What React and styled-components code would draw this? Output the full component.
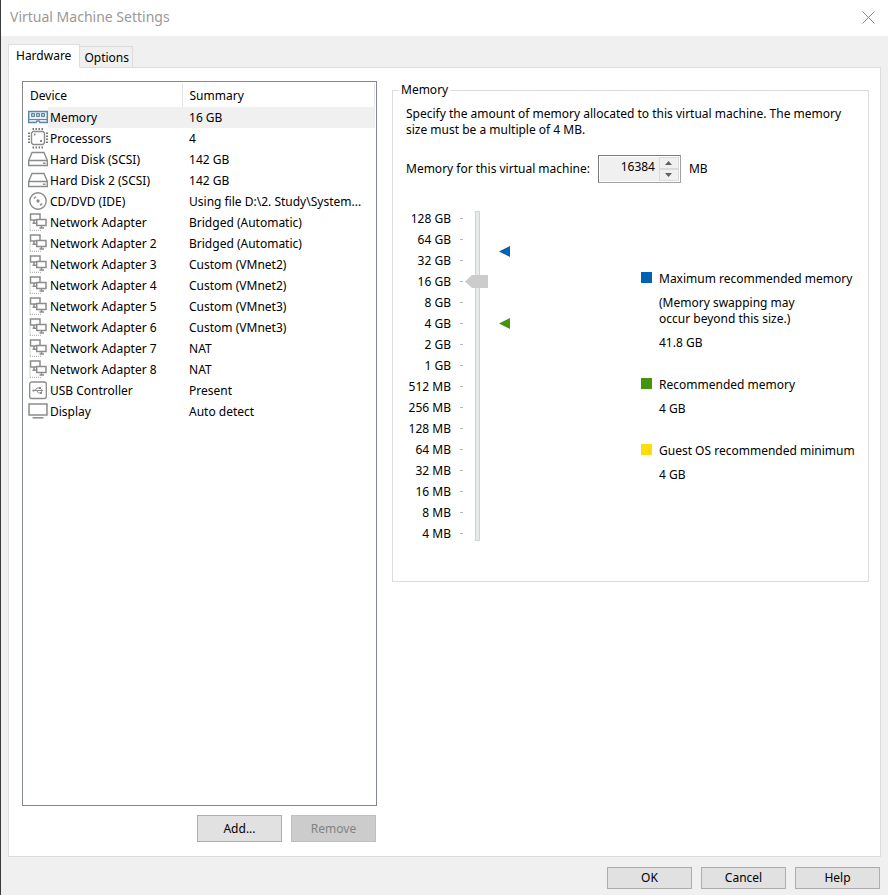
import React, { useState } from 'react'
import styled, { createGlobalStyle } from 'styled-components';

const GlobalStyle = createGlobalStyle`
* {
box-sizing: border-box;
}
body {
margin: 0;
background: #f0f0f0;
color: #000;
font: 12px/16px 'Noto Sans', Tahoma, sans-serif;
}
button, input {
font: inherit;
color: inherit;
}
`;

const Window = styled('div')`
min-height: 100vh;
display: flex;
flex-direction: column;
border-left: 1px solid #3a3a3a;
`;

const TitleBar = styled('header')`
display: flex;
align-items: center;
justify-content: space-between;
height: 36px;
padding: 0 13px 2px 9px;
background: #fff;
`;

const Title = styled('h1')`
margin: 0;
font: 400 14px/20px 'Noto Sans', 'Segoe UI', sans-serif;
color: #999;
`;

const CloseButton = styled('button')`
display: flex;
padding: 0;
border: 0;
background: none;
color: #8a8a8a;
`;

const Tabs = styled('div')`
display: flex;
align-items: flex-end;
height: 32px;
padding-left: 7px;
margin-bottom: -1px;
z-index: 1;
`;

const Tab = styled('button')`
height: ${({ $active }) => $active ? '24px' : '22px'};
padding: ${({ $active }) => $active ? '0 8px 1px 7px' : '1px 3px 0 4px'};
border: 1px solid #dcdcdc;
border-left-width: ${({ $active }) => $active ? '1px' : '0'};
border-bottom-color: ${({ $active }) => $active ? '#fff' : '#dcdcdc'};
background: ${({ $active }) => $active ? '#fff' : '#f0f0f0'};
`;

const Panel = styled('main')`
flex: 1;
display: flex;
gap: 15px;
margin: 0 7px;
padding: 13px 11px 14px 13px;
border: 1px solid #dcdcdc;
background: #fff;
`;

const DeviceColumn = styled('section')`
flex: 0 1 355px;
display: flex;
flex-direction: column;
`;

const DeviceList = styled('div')`
flex: 1;
padding: 1px 1px 0 0;
border: 1px solid #828790;
`;

const DeviceTable = styled('table')`
width: 100%;
table-layout: fixed;
border-collapse: collapse;
`;

const HeadCell = styled('th')`
height: 24px;
padding: 2px 0 0 7px;
border-right: 1px solid #e5e5e5;
font-weight: 400;
text-align: left;
`;

const IconCell = styled('td')`
height: 21px;
padding: 0 0 0 5px;
color: #8c8c8c;
`;

const Cell = styled('td')`
height: 21px;
padding: 0 5px 0 ${({ $name }) => $name ? '2px' : '7px'};
background: ${({ $selected }) => $selected ? '#f0f0f0' : 'none'};
overflow: hidden;
text-overflow: ellipsis;
white-space: nowrap;
`;

const Actions = styled('div')`
display: flex;
justify-content: flex-end;
gap: 9px;
padding: 9px 1px 0 0;
`;

const PushButton = styled('button')`
width: 85px;
height: ${({ $tall }) => $tall ? '27px' : '22px'};
padding: 0;
border: 1px solid #adadad;
background: #e1e1e1;
&:disabled {
border-color: #bfbfbf;
background: #ccc;
color: #838383;
}
`;

const GroupBox = styled('fieldset')`
flex: 1;
align-self: flex-start;
min-width: 0;
margin: 0;
padding: 7px 13px 37px;
border: 1px solid #dcdcdc;
`;

const GroupTitle = styled('legend')`
margin-left: -7px;
padding: 0 2px;
line-height: 18px;
`;

const Description = styled('p')`
margin: 0 0 17px;
`;

const AmountRow = styled('div')`
display: flex;
align-items: center;
gap: 8px;
margin-bottom: 25px;
`;

const SpinBox = styled('div')`
display: flex;
width: 83px;
height: 28px;
padding: 1px;
border: 1px solid #a0a0a8;
border-top-color: #7a7a7a;
border-left-color: #7a7a7a;
background: #fff;
`;

const AmountInput = styled('input')`
flex: 1;
min-width: 0;
padding: 0 4px 4px 0;
border: 0;
background: #f0f0f0;
text-align: right;
`;

const SpinButtons = styled('div')`
display: flex;
flex-direction: column;
width: 20px;
`;

const SpinButton = styled('button')`
flex: 1;
display: flex;
align-items: center;
justify-content: center;
padding: 0;
border: 1px solid #dadada;
background: #f0f0f0;
color: #606060;
`;

const MemoryScale = styled('div')`
display: flex;
align-items: flex-start;
`;

const ScaleList = styled('ul')`
width: 57px;
margin: 0 2px 0 0;
padding: 0;
list-style: none;
`;

const ScaleStep = styled('li')`
display: flex;
align-items: center;
justify-content: flex-end;
gap: 9px;
height: 21px;
white-space: nowrap;
&::after {
content: '';
width: 3px;
height: 1px;
background: #b4b4b4;
}
`;

const Slider = styled('input')`
appearance: none;
writing-mode: vertical-lr;
direction: rtl;
width: 25px;
height: 330px;
margin: 3px 9px 0 0;
background: linear-gradient(#e7eaea, #e7eaea) center / 3px 328px no-repeat,
linear-gradient(#d2d2d2, #d2d2d2) center / 5px 330px no-repeat;
&::-webkit-slider-thumb {
appearance: none;
width: 25px;
height: 15px;
background: #ccc;
clip-path: polygon(0 50%, 7px 1px, 23px 1px, 23px 14px, 7px 14px);
}
`;

const MarkerTrack = styled('div')`
position: relative;
width: 11px;
height: 336px;
`;

const Marker = styled('svg')`
position: absolute;
left: 0;
margin-top: -6px;
color: ${({ $color }) => $color};
`;

const Legend = styled('dl')`
flex: 0 0 214px;
display: flex;
flex-direction: column;
gap: 26px;
margin: 63px 0 0 auto;
`;

const LegendItem = styled('div')`
display: flex;
flex-direction: column;
gap: 8px;
`;

const LegendTitle = styled('dt')`
display: flex;
align-items: flex-start;
gap: 7px;
white-space: nowrap;
&::before {
content: '';
width: 11px;
height: 11px;
margin-top: 1px;
background: ${({ $color }) => $color};
}
`;

const LegendText = styled('dd')`
margin: 0 0 0 18px;
white-space: pre-line;
`;

const Footer = styled('footer')`
display: flex;
justify-content: flex-end;
gap: 9px;
padding: 10px 8px 6px;
`;

const IconSvg = styled('svg')`
display: block;
fill: none;
stroke: currentColor;
`;

const icons = {
    memory: (
        <g stroke="#5f87a5">
            <path d="M.7 4.500h18.600v11H12l-1-1.500H9l-1 1.500H.7z" fill="#e4eff7" strokeWidth="1.400" />
            <path d="M3.500 6.500h3v3h-3zM8.500 6.500h3v3h-3zM13.500 6.500h3v3h-3z" fill="#a9c3d6" />
            <path d="M1 12.500h18" />
        </g>
    ),
    cpu: (
        <g>
            <path d="M5 3.500h10l1.500 1.500v10l-1.500 1.500H5L3.500 15V5z" fill="#fff" strokeWidth="1.400" />
            <path d="M4.500 1h11M4.500 19.500h11" stroke="#777" strokeWidth="2" strokeDasharray="1.500 1.500" />
            <path d="M1 4.500v12M19 4.500v12" stroke="#777" strokeWidth="2" strokeDasharray="1.500 1.500" />
            <path d="M6 6.500h1.500M12 13h2" strokeWidth="1.800" />
        </g>
    ),
    disk: (
        <path d="M.7 11.500h18.600v5H.7zM.7 11.500L4 3.500h12l3.300 8M15 14.200h2.500" strokeWidth="1.400" />
    ),
    cd: (
        <g strokeWidth="1.400">
            <circle cx="10" cy="10" r="8.200" />
            <circle cx="10" cy="10" r="1" fill="currentColor" />
            <path d="M6 7.500a4.500 4.500 0 0 1 2-1.700M14 12.500a4.500 4.500 0 0 1-2 1.700" />
        </g>
    ),
    network: (
        <g strokeWidth="1.500">
            <path d="M2.500 2h9.500v6H2.500zM6 8v3M4.500 11.300H8" />
            <path d="M8.700 7.500h9.300v6H8.700z" fill="#fff" />
            <path d="M13.500 13.500V16M11.500 16h4.500" />
            <path d="M2 9.500v9M2 18.300h11" stroke="#a6a6a6" strokeWidth="1" strokeDasharray="1 1" />
        </g>
    ),
    usb: (
        <g>
            <rect x="1.700" y="2" width="16.600" height="16.500" rx="2" strokeWidth="1.300" />
            <path d="M5 10.500h9M7 10.500l2-2.500h2.500M8.500 10.500l2 2.500H13" />
            <path d="M13 9v3l2.500-1.500zM4.500 9.500h2v2h-2zM11 7h2v2h-2zM12 12h2v2h-2z" fill="currentColor" stroke="none" />
        </g>
    ),
    display: (
        <g strokeWidth="1.500">
            <path d="M1 3h18v11H1z" />
            <path d="M4.500 16.800h11" />
        </g>
    ),
};

const devices = [
    { icon: 'memory', name: 'Memory', summary: '16 GB' },
    { icon: 'cpu', name: 'Processors', summary: '4' },
    { icon: 'disk', name: 'Hard Disk (SCSI)', summary: '142 GB' },
    { icon: 'disk', name: 'Hard Disk 2 (SCSI)', summary: '142 GB' },
    { icon: 'cd', name: 'CD/DVD (IDE)', summary: 'Using file D:\\2. Study\\System...' },
    { icon: 'network', name: 'Network Adapter', summary: 'Bridged (Automatic)' },
    { icon: 'network', name: 'Network Adapter 2', summary: 'Bridged (Automatic)' },
    { icon: 'network', name: 'Network Adapter 3', summary: 'Custom (VMnet2)' },
    { icon: 'network', name: 'Network Adapter 4', summary: 'Custom (VMnet2)' },
    { icon: 'network', name: 'Network Adapter 5', summary: 'Custom (VMnet3)' },
    { icon: 'network', name: 'Network Adapter 6', summary: 'Custom (VMnet3)' },
    { icon: 'network', name: 'Network Adapter 7', summary: 'NAT' },
    { icon: 'network', name: 'Network Adapter 8', summary: 'NAT' },
    { icon: 'usb', name: 'USB Controller', summary: 'Present' },
    { icon: 'display', name: 'Display', summary: 'Auto detect' },
];

const steps = [
    '128 GB', '64 GB', '32 GB', '16 GB', '8 GB', '4 GB', '2 GB', '1 GB',
    '512 MB', '256 MB', '128 MB', '64 MB', '32 MB', '16 MB', '8 MB', '4 MB',
];

const STEP_HEIGHT = 21;

const hints = [
    { color: '#0063b1', gb: 41.8, title: 'Maximum recommended memory', note: '(Memory swapping may\noccur beyond this size.)', value: '41.8 GB', marker: true },
    { color: '#43960b', gb: 4, title: 'Recommended memory', value: '4 GB', marker: true },
    { color: '#ffdc0a', gb: 4, title: 'Guest OS recommended minimum', value: '4 GB' },
];

// the scale is logarithmic, 128 GB is the first step
const markerTop = (gb) => Math.round((7 - Math.log2(gb) + 0.5) * STEP_HEIGHT);

function DeviceTableView() {
    const [selected, setSelected] = useState(0);
    return (
        <DeviceTable>
            <colgroup>
                <col style={{ width: 25 }} />
                <col style={{ width: 134 }} />
                <col />
            </colgroup>
            <thead>
                <tr>
                    <HeadCell colSpan={2} scope="col">Device</HeadCell>
                    <HeadCell scope="col">Summary</HeadCell>
                </tr>
            </thead>
            <tbody>
                {
                    devices.map((device, index) => (
                        <tr key={device.name} onClick={() => setSelected(index)}>
                            <IconCell>
                                <IconSvg width="20" height="21" viewBox="0 0 20 21" aria-hidden="true">
                                    {icons[device.icon]}
                                </IconSvg>
                            </IconCell>
                            <Cell $name $selected={index === selected}>{device.name}</Cell>
                            <Cell $selected={index === selected}>{device.summary}</Cell>
                        </tr>
                    ))
                }
            </tbody>
        </DeviceTable>
    )
}

function MemoryGroup() {
    // exponent: 0 is 4 MB, 15 is 128 GB
    const [level, setLevel] = useState(12);
    const move = (delta) => setLevel(Math.min(15, Math.max(0, level + delta)));
    return (
        <GroupBox>
            <GroupTitle>Memory</GroupTitle>
            <Description>
                Specify the amount of memory allocated to this virtual machine. The memory size must be a multiple of 4 MB.
            </Description>
            <AmountRow>
                <label htmlFor="amount">Memory for this virtual machine:</label>
                <SpinBox>
                    <AmountInput id="amount" inputMode="numeric" value={4 * 2 ** level} readOnly />
                    <SpinButtons>
                        <SpinButton aria-label="Increase" onClick={() => move(1)}>
                            <svg width="7" height="4" viewBox="0 0 7 4"><path d="M0 4L3.500 0L7 4z" fill="currentColor" /></svg>
                        </SpinButton>
                        <SpinButton aria-label="Decrease" onClick={() => move(-1)}>
                            <svg width="7" height="4" viewBox="0 0 7 4"><path d="M0 0L3.500 4L7 0z" fill="currentColor" /></svg>
                        </SpinButton>
                    </SpinButtons>
                </SpinBox>
                <span>MB</span>
            </AmountRow>
            <MemoryScale>
                <ScaleList>
                    {steps.map(step => <ScaleStep key={step}>{step}</ScaleStep>)}
                </ScaleList>
                <Slider
                    type="range"
                    aria-label="Memory size"
                    min="0"
                    max="15"
                    value={level}
                    onChange={(e) => setLevel(Number(e.target.value))}
                />
                <MarkerTrack>
                    {
                        hints.filter(hint => hint.marker).map(hint => (
                            <Marker
                                key={hint.title}
                                $color={hint.color}
                                style={{ top: markerTop(hint.gb) }}
                                width="11"
                                height="11"
                                viewBox="0 0 11 11"
                            >
                                <path d="M0 5.500L11 0v11z" fill="currentColor" />
                            </Marker>
                        ))
                    }
                </MarkerTrack>
                <Legend>
                    {
                        hints.map(hint => (
                            <LegendItem key={hint.title}>
                                <LegendTitle $color={hint.color}>{hint.title}</LegendTitle>
                                {hint.note ? <LegendText>{hint.note}</LegendText> : null}
                                <LegendText>{hint.value}</LegendText>
                            </LegendItem>
                        ))
                    }
                </Legend>
            </MemoryScale>
        </GroupBox>
    )
}

export default function App() {
    return (
        <Window>
            <GlobalStyle />
            <TitleBar>
                <Title>Virtual Machine Settings</Title>
                <CloseButton aria-label="Close">
                    <svg width="13" height="13" viewBox="0 0 13 13">
                        <path d="M.5 .5l12 12M12.500 .5l-12 12" stroke="currentColor" />
                    </svg>
                </CloseButton>
            </TitleBar>
            <Tabs role="tablist">
                <Tab role="tab" aria-selected="true" $active>Hardware</Tab>
                <Tab role="tab" aria-selected="false">Options</Tab>
            </Tabs>
            <Panel>
                <DeviceColumn>
                    <DeviceList>
                        <DeviceTableView />
                    </DeviceList>
                    <Actions>
                        <PushButton $tall>Add...</PushButton>
                        <PushButton $tall disabled>Remove</PushButton>
                    </Actions>
                </DeviceColumn>
                <MemoryGroup />
            </Panel>
            <Footer>
                <PushButton>OK</PushButton>
                <PushButton>Cancel</PushButton>
                <PushButton>Help</PushButton>
            </Footer>
        </Window>
    )
}
